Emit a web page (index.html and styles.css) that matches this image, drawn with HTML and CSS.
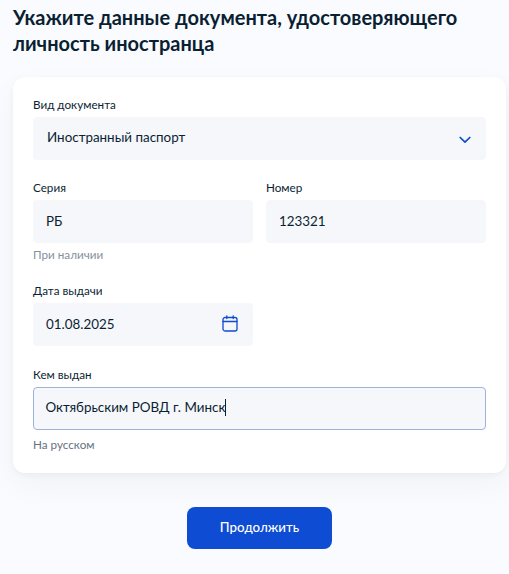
FILE: index.html
```html
<!DOCTYPE html>
<html lang="ru">
<head>
    <meta charset="UTF-8">
    <title>Данные документа</title>
    <link rel="stylesheet" href="styles.css">
</head>
<body>
    <div class="page">
        <h1>Укажите данные документа, удостоверяющего личность иностранца</h1>
        <div class="card">
            <div class="field">
                <div class="label">Вид документа</div>
                <div class="control control-select">
                    <span>Иностранный паспорт</span>
                    <svg class="chevron" viewBox="0 0 12 8" fill="none">
                        <path d="M1.2 1.5L6 6.2L10.8 1.5" stroke="#0d4cd3" stroke-width="1.7" stroke-linecap="round" stroke-linejoin="round"/>
                    </svg>
                </div>
            </div>
            <div class="row row-first">
                <div class="field">
                    <div class="label">Серия</div>
                    <div class="control"><span>РБ</span></div>
                    <div class="hint">При наличии</div>
                </div>
                <div class="field">
                    <div class="label">Номер</div>
                    <div class="control"><span>123321</span></div>
                </div>
            </div>
            <div class="row row-date">
                <div class="field">
                    <div class="label">Дата выдачи</div>
                    <div class="control control-date">
                        <span>01.08.2025</span>
                        <svg class="calendar" viewBox="0 0 16 17" fill="none">
                            <rect x="1" y="2.5" width="14" height="13.5" rx="2" stroke="#0d4cd3" stroke-width="1.3"/>
                            <path d="M1 6.5H15M4.8 0.8V3.6M11.2 0.8V3.6" stroke="#0d4cd3" stroke-width="1.3" stroke-linecap="round"/>
                        </svg>
                    </div>
                </div>
            </div>
            <div class="field field-issued">
                <div class="label">Кем выдан</div>
                <div class="control control-focus"><span>Октябрьским РОВД г. Минск</span><span class="caret"></span></div>
                <div class="hint hint-issued">На русском</div>
            </div>
        </div>
        <div class="actions">
            <button class="btn-primary">Продолжить</button>
        </div>
    </div>
</body>
</html>
```

FILE: styles.css
```css
* { margin: 0; padding: 0; box-sizing: border-box; }
body {
    font-family: 'Lato', 'Noto Sans', sans-serif;
    background: #f9fbfe;
    color: #0b1f33;
    height: 574px;
    overflow: hidden;
}
.page {
    padding: 4px 3px 0 13px;
}
h1 {
    font-size: 20px;
    line-height: 26px;
    font-weight: 700;
    color: #0b1f33;
    margin-bottom: 21px;
}
.card {
    background: #ffffff;
    border-radius: 12px;
    padding: 20px;
    height: 396px;
    box-shadow: 0 2px 6px rgba(11, 31, 51, 0.04), 0 12px 32px rgba(11, 31, 51, 0.04);
}
.label {
    font-size: 11.7px;
    line-height: 14px;
    color: #0b1f33;
    margin-bottom: 6px;
}
.control {
    height: 43px;
    background: #f5f7fa;
    border-radius: 4px;
    padding: 0 13px;
    display: flex;
    align-items: center;
    font-size: 13.4px;
    color: #0b1f33;
}
.control span { margin-top: -2px; }
.control-select { padding-left: 14px; justify-content: space-between; }
.control-select span { margin-top: -4px; }
.control-date { justify-content: space-between; padding-right: 15px; }
.chevron { width: 12px; height: 8px; margin-right: 2px; margin-top: 2px; }
.calendar { width: 16px; height: 17px; margin-top: -2px; }
.row {
    display: grid;
    grid-template-columns: 220px 220px;
    gap: 13px;
}
.row-first { margin-top: 20px; }
.row-date { margin-top: 22px; }
.hint {
    font-size: 11.7px;
    line-height: 14px;
    color: #86909c;
    margin-top: 4px;
}
.hint-issued { margin-top: 7px; color: #66727f; }
.field-issued { margin-top: 21px; }
.control-focus {
    background: #f5f7fa;
    border: 1px solid #9fb2dc;
    padding: 0 11.5px;
}
.control-focus span { margin-top: -3px; }
.control .caret {
    display: inline-block;
    width: 1px;
    height: 17px;
    margin-top: -2px;
    background: #0b1f33;
}
.actions {
    display: flex;
    justify-content: center;
    margin-top: 34px;
}
.btn-primary {
    width: 145px;
    height: 42px;
    background: #0d4cd3;
    color: #ffffff;
    border: none;
    border-radius: 8px;
    font-family: inherit;
    font-size: 13.3px;
    font-weight: 500;
    padding-bottom: 2px;
}
```
